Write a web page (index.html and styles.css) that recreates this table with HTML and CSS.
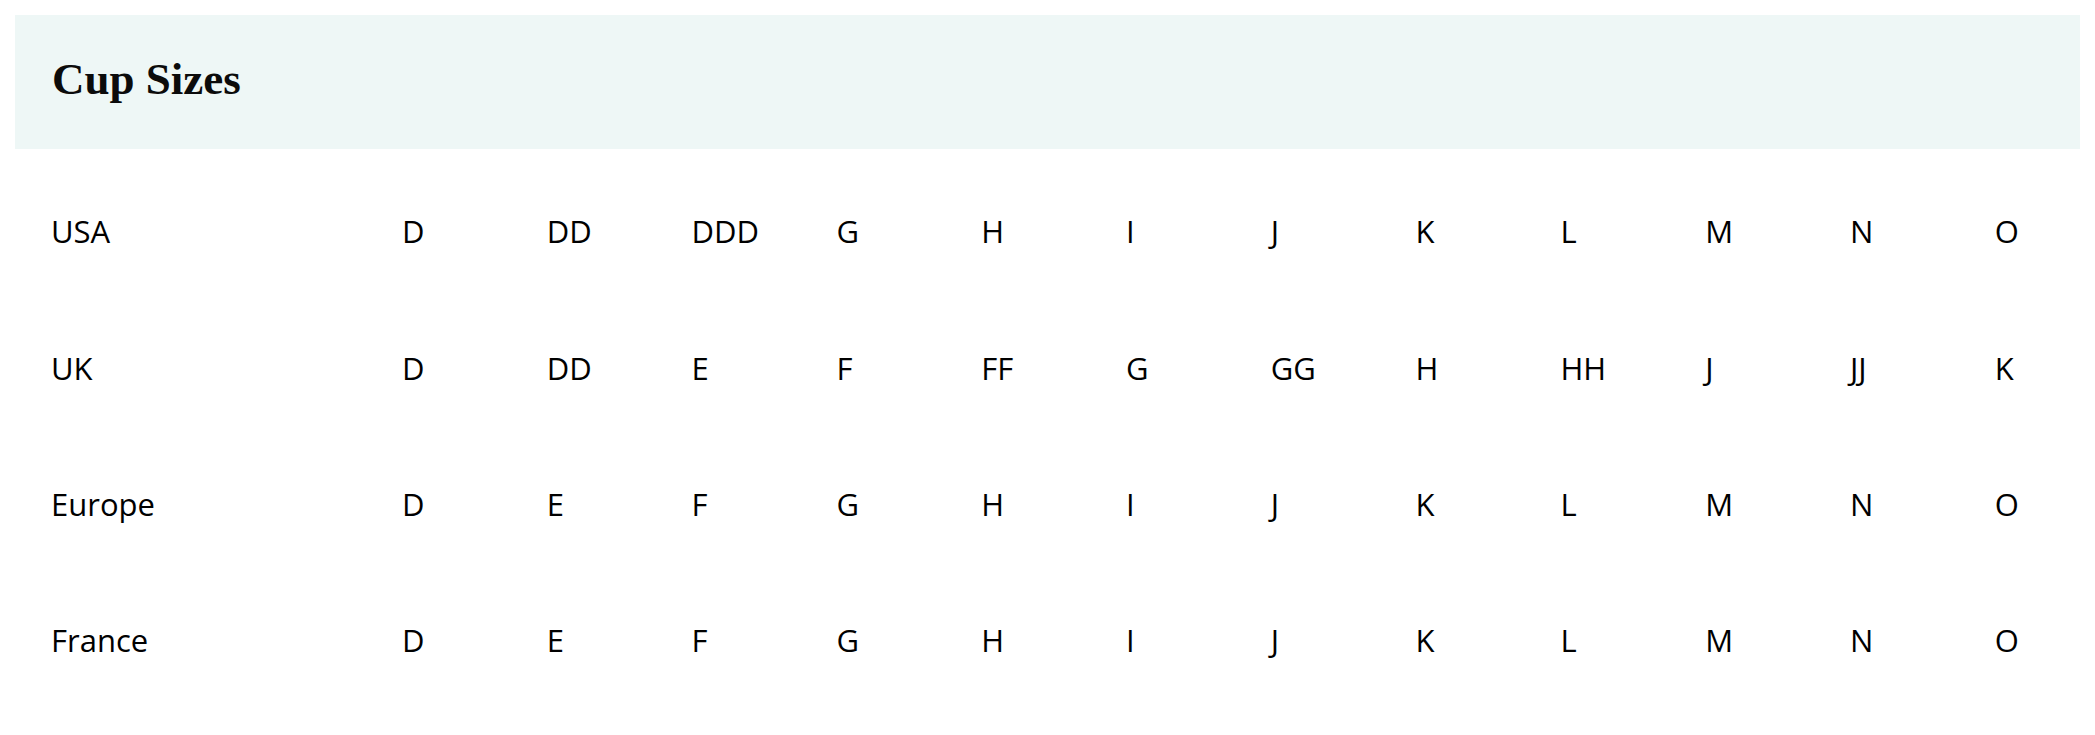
FILE: index.html
```html
<!DOCTYPE html>
<html lang="en">
<head>
<meta charset="utf-8">
<title>Cup Sizes</title>
<link rel="stylesheet" href="styles.css">
</head>
<body>
<section class="chart">
  <header class="chart-head">
    <h2 class="chart-title">Cup Sizes</h2>
  </header>
  <div class="chart-body">
    <div class="row">
      <span class="label">USA</span>
      <span>D</span><span>DD</span><span>DDD</span><span>G</span><span>H</span><span>I</span><span>J</span><span>K</span><span>L</span><span>M</span><span>N</span><span>O</span>
    </div>
    <div class="row">
      <span class="label">UK</span>
      <span>D</span><span>DD</span><span>E</span><span>F</span><span>FF</span><span>G</span><span>GG</span><span>H</span><span>HH</span><span>J</span><span>JJ</span><span>K</span>
    </div>
    <div class="row">
      <span class="label">Europe</span>
      <span>D</span><span>E</span><span>F</span><span>G</span><span>H</span><span>I</span><span>J</span><span>K</span><span>L</span><span>M</span><span>N</span><span>O</span>
    </div>
    <div class="row">
      <span class="label">France</span>
      <span>D</span><span>E</span><span>F</span><span>G</span><span>H</span><span>I</span><span>J</span><span>K</span><span>L</span><span>M</span><span>N</span><span>O</span>
    </div>
  </div>
</section>
</body>
</html>
```

FILE: styles.css
```css
html, body {
  margin: 0;
  padding: 0;
  background: #ffffff;
}

body {
  font-family: "Open Sans", "Noto Sans", sans-serif;
  color: #000000;
}

.chart {
  padding: 15px 15px 0 15px;
}

.chart-head {
  background: #eef7f6;
  height: 134px;
  display: flex;
  align-items: center;
  padding-left: 37px;
  box-sizing: border-box;
}

.chart-title {
  margin: 0;
  font-family: "Liberation Serif", "Times New Roman", serif;
  font-weight: 700;
  font-size: 45px;
  line-height: 1;
  color: #0b0b0b;
  padding-bottom: 6px;
}

.chart-body {
  padding-top: 14px;
}

.row {
  display: grid;
  grid-template-columns: 351px repeat(12, 144.8px);
  align-items: center;
  height: 136.4px;
  padding-left: 36px;
  font-size: 31px;
  line-height: 40px;
  white-space: nowrap;
}
```
